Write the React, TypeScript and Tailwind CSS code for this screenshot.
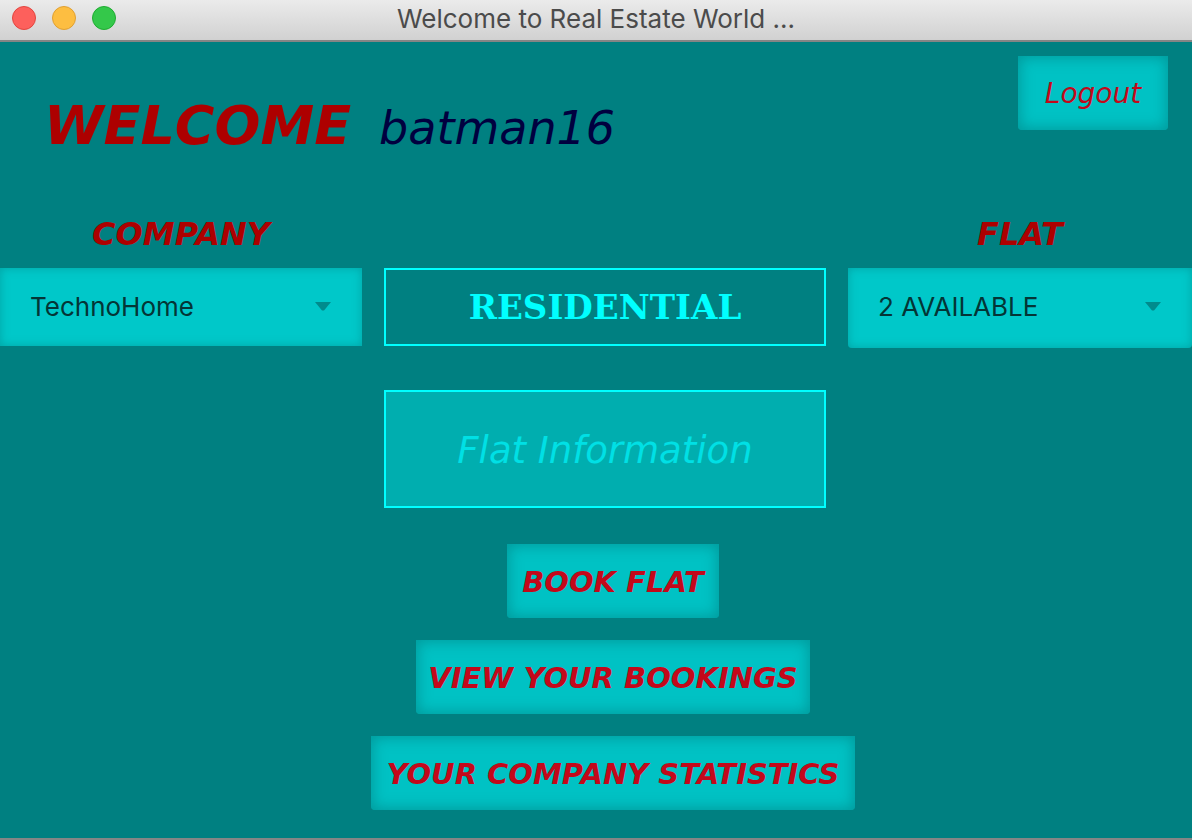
import { useId, type ReactNode } from 'react';

const HAND = "font-['Bradley_Hand','DejaVu_Sans',cursive] italic";

function ActionButton({ className, children }: { className: string; children: ReactNode }) {
  return (
    <button
      type="button"
      className={`${HAND} ${className} h-[74px] whitespace-nowrap rounded-b-[4px] bg-[#00c2c4] pt-0.5 text-center leading-9 text-[#c3081a] shadow-[inset_0_0_14px_2px_rgba(0,128,130,0.6)]`}
    >
      {children}
    </button>
  );
}

function Picker({ label, options, className }: { label: string; options: string[]; className: string }) {
  const id = useId();
  return (
    <div className="flex flex-col">
      <label htmlFor={id} className={`${HAND} flex h-[54px] items-start justify-center text-[32px] font-bold leading-10 text-[#ad0000]`}>
        {label}
      </label>
      <div className="relative">
        <select
          id={id}
          className={`${className} w-full appearance-none bg-[#00c8c9] pl-[30px] pr-16 font-['Inter',sans-serif] text-[26px] text-[#043536] shadow-[inset_0_0_10px_0_rgba(0,128,130,0.5)]`}
        >
          {options.map((option) => (
            <option key={option}>{option}</option>
          ))}
        </select>
        <svg aria-hidden="true" viewBox="0 0 16 9" className="pointer-events-none absolute right-[31px] top-[34px] h-[9px] w-4">
          <path d="M0 0h16L9 8.500H7z" fill="#008b8c" />
        </svg>
      </div>
    </div>
  );
}

export default function App() {
  return (
    <div className="flex min-h-screen flex-col border-b-2 border-[#858585] bg-[#008081]">
      <header className="relative flex h-[42px] items-center justify-center border-b-2 border-[#858585] bg-linear-to-b from-[#ebebeb] to-[#d1d1d1] pb-[2px]">
        <div className="absolute left-3 top-1.5 flex gap-4">
          <button type="button" aria-label="Close" className="size-6 rounded-full border border-[#e2463f] bg-[#fd605c]" />
          <button type="button" aria-label="Minimize" className="size-6 rounded-full border border-[#e0a033] bg-[#fdbe41]" />
          <button type="button" aria-label="Zoom" className="size-6 rounded-full border border-[#1fac31] bg-[#34c84a]" />
        </div>
        <h1 className="font-['Inter',sans-serif] text-[26px] leading-8 text-[#4b4b4b]">Welcome to Real Estate World ...</h1>
      </header>

      <main className="flex flex-1 flex-col">
        <div className="flex h-[172px] items-start justify-between pl-11 pr-6 pt-3.5">
          <p className={`${HAND} flex items-baseline gap-7 pt-8 leading-[76px]`}>
            <span className="text-[54px] font-bold text-[#ad0000]">WELCOME</span>
            <span className="text-[46px] text-[#00003f]">batman16</span>
          </p>
          <ActionButton className="w-[150px] text-[28px]">Logout</ActionButton>
        </div>

        <div className="grid grid-cols-[362fr_442fr_344fr] gap-x-[22px]">
          <Picker label="COMPANY" options={['TechnoHome']} className="h-[78px] pb-0.5" />
          <div className="flex flex-col gap-11 pt-[54px]">
            <div className="flex h-[78px] items-center justify-center border-2 border-[#00ffff] font-['Copperplate','DejaVu_Serif',serif] text-[34px] font-bold text-[#00ffff]">
              RESIDENTIAL
            </div>
            <button type="button" className={`${HAND} h-[118px] border-2 border-[#00ffff] bg-[#00aeaf] pt-1 text-[37px] text-[#00e0e5]`}>
              Flat Information
            </button>
          </div>
          <Picker label="FLAT" options={['2 AVAILABLE']} className="h-20 rounded-b-[4px] pb-1" />
        </div>

        <div className="flex flex-col items-center gap-[22px] pb-7 pl-[34px] pt-9">
          <ActionButton className="w-[212px] text-[29px] font-bold">BOOK FLAT</ActionButton>
          <ActionButton className="w-[394px] text-[29px] font-bold">VIEW YOUR BOOKINGS</ActionButton>
          <ActionButton className="w-[484px] text-[29px] font-bold">YOUR COMPANY STATISTICS</ActionButton>
        </div>
      </main>
    </div>
  );
}
